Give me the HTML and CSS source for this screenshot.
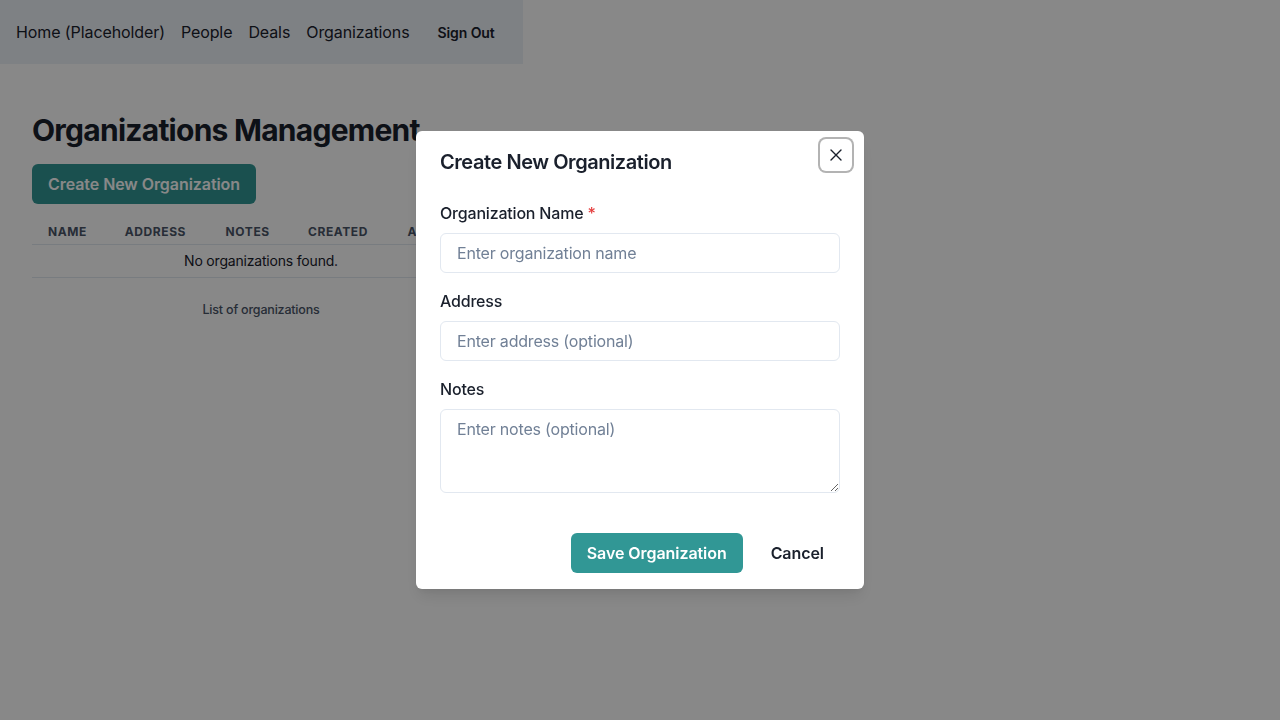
FILE: index.html
```html
<!DOCTYPE html>
<html lang="en">
<head>
<meta charset="utf-8">
<title>Organizations Management</title>
<link rel="stylesheet" href="styles.css">
</head>
<body>
<nav class="nav">
  <a class="nav-link" href="#">Home (Placeholder)</a>
  <a class="nav-link" href="#">People</a>
  <a class="nav-link" href="#">Deals</a>
  <a class="nav-link" href="#">Organizations</a>
  <button class="signout">Sign Out</button>
</nav>
<main class="main">
  <h1 class="title">Organizations Management</h1>
  <button class="btn-primary">Create New Organization</button>
  <table class="table">
    <thead>
      <tr><th>Name</th><th>Address</th><th>Notes</th><th>Created</th><th>Actions</th></tr>
    </thead>
    <tbody>
      <tr><td colspan="5" class="empty">No organizations found.</td></tr>
    </tbody>
    <caption class="caption">List of organizations</caption>
  </table>
</main>
<div class="overlay"></div>
<div class="modal-wrap">
  <section class="modal">
    <header class="modal-header">Create New Organization</header>
    <button class="close" aria-label="Close">
      <svg width="12" height="12" viewBox="0 0 12 12"><path d="M1 1L11 11M11 1L1 11" stroke="#1A202C" stroke-width="1.4" stroke-linecap="round"/></svg>
    </button>
    <div class="modal-body">
      <div class="field">
        <label class="label">Organization Name <span class="req">*</span></label>
        <input class="input" placeholder="Enter organization name">
      </div>
      <div class="field">
        <label class="label">Address</label>
        <input class="input" placeholder="Enter address (optional)">
      </div>
      <div class="field">
        <label class="label">Notes</label>
        <textarea class="textarea" placeholder="Enter notes (optional)"></textarea>
      </div>
    </div>
    <footer class="modal-footer">
      <button class="btn-save">Save Organization</button>
      <button class="btn-ghost">Cancel</button>
    </footer>
  </section>
</div>
</body>
</html>
```
FILE: styles.css
```css
* { box-sizing: border-box; }
html, body { margin: 0; padding: 0; }
body {
  font-family: Inter, "Noto Sans", "Liberation Sans", sans-serif;
  color: #1A202C;
  background: #fff;
  height: 720px;
  overflow: hidden;
  letter-spacing: -0.012em;
}
.nav {
  display: flex;
  align-items: center;
  gap: 16px;
  width: fit-content;
  height: 64px;
  padding: 0 16px;
  background: #EDF2F7;
  letter-spacing: -0.006em;
}
.nav-link {
  color: #1A202C;
  text-decoration: none;
  font-size: 16px;
  line-height: 24px;
}
.signout {
  font-family: inherit;
  letter-spacing: inherit;
  font-size: 14px;
  font-weight: 600;
  color: #1A202C;
  background: transparent;
  border: 0;
  height: 32px;
  padding: 0 12px;
  border-radius: 6px;
}
.main {
  padding: 48px 32px 32px;
}
.title {
  margin: 0 0 16px;
  font-size: 30px;
  line-height: 36px;
  font-weight: 700;
  letter-spacing: -0.025em;
  color: #1A202C;
}
.btn-primary {
  font-family: inherit;
  letter-spacing: -0.004em;
  font-size: 16px;
  font-weight: 600;
  color: #fff;
  background: #319795;
  border: 0;
  border-radius: 6px;
  height: 40px;
  padding: 0 16px;
  margin-bottom: 16px;
}
.table {
  border-collapse: collapse;
  width: 458px;
  font-size: 14px;
}
.table th {
  text-align: left;
  font-size: 12px;
  font-weight: 700;
  letter-spacing: 0.05em;
  text-transform: uppercase;
  color: #4A5568;
  padding: 4px 16px;
  line-height: 16px;
  border-bottom: 1px solid #E2E8F0;
}
.table td {
  padding: 4px 16px;
  line-height: 24px;
  border-bottom: 1px solid #E2E8F0;
}
.empty { text-align: center; }
.caption {
  caption-side: bottom;
  margin-top: 20px;
  padding: 0 16px;
  font-size: 12.5px;
  font-weight: 500;
  line-height: 24px;
  color: #4A5568;
  text-align: center;
}
.overlay {
  position: fixed;
  inset: 0;
  background: rgba(0, 0, 0, 0.465);
}
.modal-wrap {
  position: fixed;
  inset: 0;
  display: flex;
  align-items: center;
  justify-content: center;
}
.modal {
  position: relative;
  width: 448px;
  background: #fff;
  border-radius: 6px;
  box-shadow: 0 10px 15px -3px rgba(0,0,0,0.1), 0 4px 6px -2px rgba(0,0,0,0.05);
}
.modal-header {
  padding: 16px 24px;
  font-size: 20px;
  line-height: 30px;
  font-weight: 600;
  letter-spacing: -0.022em;
}
.close {
  position: absolute;
  top: 8px;
  right: 12px;
  width: 32px;
  height: 32px;
  display: flex;
  align-items: center;
  justify-content: center;
  background: #fff;
  border: 0;
  border-radius: 6px;
  box-shadow: 0 0 0 2px #B3B3B3;
  padding: 0;
}
.modal-body {
  padding: 8px 24px 24px;
  display: flex;
  flex-direction: column;
  gap: 16px;
}
.field { display: flex; flex-direction: column; }
.label {
  font-size: 16px;
  font-weight: 500;
  line-height: 24px;
  margin-bottom: 8px;
}
.req { color: #E53E3E; }
.input, .textarea {
  font-family: inherit;
  letter-spacing: inherit;
  font-size: 16px;
  color: #1A202C;
  width: 100%;
  border: 1px solid #E2E8F0;
  border-radius: 6px;
  padding: 0 16px;
  background: #fff;
  outline: none;
}
.input { height: 40px; }
.textarea {
  height: 84px;
  padding: 7px 16px;
  line-height: 24px;
  resize: vertical;
  display: block;
}
.input::placeholder, .textarea::placeholder { color: #718096; opacity: 1; }
.modal-footer {
  display: flex;
  justify-content: flex-end;
  align-items: center;
  padding: 16px 24px;
}
.btn-save {
  font-family: inherit;
  letter-spacing: -0.004em;
  font-size: 16px;
  font-weight: 600;
  color: #fff;
  background: #319795;
  border: 0;
  border-radius: 6px;
  height: 40px;
  padding: 0 16px;
  margin-right: 12px;
}
.btn-ghost {
  font-family: inherit;
  letter-spacing: -0.004em;
  font-size: 16px;
  font-weight: 600;
  color: #1A202C;
  background: transparent;
  border: 0;
  border-radius: 6px;
  height: 40px;
  padding: 0 16px;
}
```
